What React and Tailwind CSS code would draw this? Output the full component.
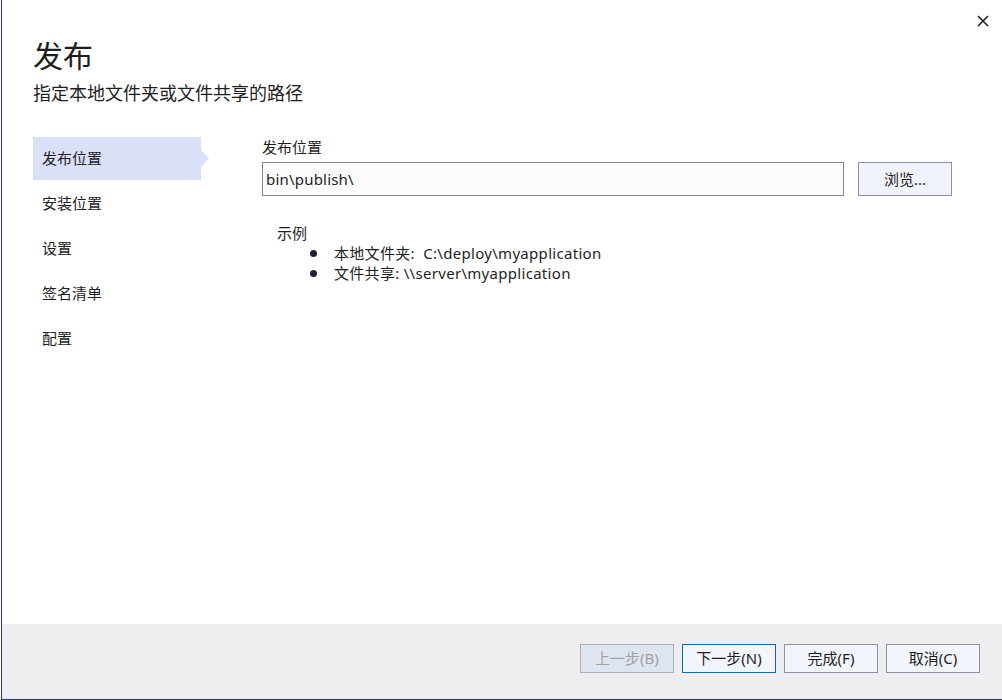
import React from "react";

const font = { fontFamily: '"Noto Sans", "Noto Sans CJK SC", sans-serif' };

function NavItem({ label, active }) {
  if (active) {
    return (
      <div className="relative flex h-[43px] w-[168px] items-center bg-[#dae0f7] pl-[9px]">
        <span className="text-[15px] text-[#1e1e1e]">{label}</span>
        <svg className="absolute left-[168px] top-[13px]" width="9" height="17" viewBox="0 0 9 17">
          <path d="M0 0 L8 8.5 L0 17 Z" fill="#dae0f7" />
        </svg>
      </div>
    );
  }
  return (
    <div className="flex h-[43px] w-[168px] items-center pl-[9px]">
      <span className="text-[15px] text-[#1e1e1e]">{label}</span>
    </div>
  );
}

function FooterButton({ label, variant }) {
  const cls =
    variant === "disabled"
      ? "border-[#a9b0bb] bg-[#dfe5f0] text-[#a2a2a2]"
      : variant === "focused"
      ? "border-[#1068b8] bg-[#f3f5fc] text-[#1e1e1e]"
      : "border-[#8b93a3] bg-[#f3f5fc] text-[#1e1e1e]";
  return (
    <div className={`flex h-[29px] w-[94px] items-center justify-center border text-[15px] ${cls}`}>
      {label}
    </div>
  );
}

export default function App() {
  return (
    <div className="flex h-[700px] w-[1002px] bg-white" style={font}>
      <div className="w-px bg-white" />
      <div className="flex flex-1 flex-col border-b border-l border-[#27397a]">
        <div className="relative flex flex-1 flex-col">
          <svg className="absolute left-[975px] top-[15px]" width="12" height="12" viewBox="0 0 12 12">
            <path d="M1 1 L11 11 M11 1 L1 11" stroke="#1e1e1e" strokeWidth="1.6" />
          </svg>
          <div className="pl-[31px] pt-[36px]">
            <div className="text-[30px] leading-[40px] text-[#1e1e1e]">发布</div>
            <div className="mt-[5px] text-[18px] leading-[24px] text-[#1e1e1e]">指定本地文件夹或文件共享的路径</div>
          </div>
          <div className="mt-[32px] flex pl-[31px]">
            <div className="flex flex-col gap-[2px]">
              <NavItem label="发布位置" active />
              <NavItem label="安装位置" />
              <NavItem label="设置" />
              <NavItem label="签名清单" />
              <NavItem label="配置" />
            </div>
            <div className="ml-[61px] flex flex-col">
              <div className="text-[15px] leading-[20px] text-[#1e1e1e]">发布位置</div>
              <div className="mt-[5px] flex">
                <div className="flex h-[34px] w-[582px] items-center border border-[#7d8797] bg-[#fbfbfb] pl-[3px] text-[15px] tracking-[0.2px] text-[#1e1e1e]">
                  bin\publish\
                </div>
                <div className="ml-[14px] flex h-[34px] w-[94px] items-center justify-center border border-[#8b93a3] bg-[#f0f3fc] text-[15px] text-[#1e1e1e]">
                  浏览...
                </div>
              </div>
              <div className="mt-[27px] pl-[15px] text-[15px] leading-[20px] text-[#1e1e1e]">示例</div>
              <div className="flex flex-col text-[15px] leading-[20px] tracking-[0.3px] text-[#1e1e1e]">
                <div className="flex items-center">
                  <span className="ml-[48px] inline-block h-[7px] w-[7px] rounded-full bg-[#1e2030]" />
                  <span className="ml-[17px]">本地文件夹:&nbsp;&nbsp;C:\deploy\myapplication</span>
                </div>
                <div className="flex items-center">
                  <span className="ml-[48px] inline-block h-[7px] w-[7px] rounded-full bg-[#1e2030]" />
                  <span className="ml-[17px]">文件共享: \\server\myapplication</span>
                </div>
              </div>
            </div>
          </div>
        </div>
        <div className="flex h-[75px] items-start justify-end gap-[8px] bg-[#eeeef1] pr-[22px] pt-[20px]">
          <FooterButton label="上一步(B)" variant="disabled" />
          <FooterButton label="下一步(N)" variant="focused" />
          <FooterButton label="完成(F)" />
          <FooterButton label="取消(C)" />
        </div>
      </div>
    </div>
  );
}
